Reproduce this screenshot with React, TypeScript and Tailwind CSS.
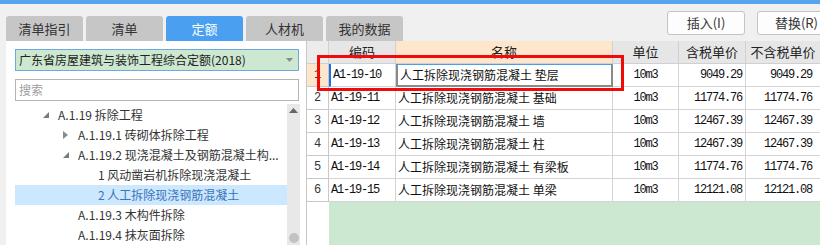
import React from "react";

const cjk = { fontFamily: '"Noto Sans CJK SC", "Noto Sans", sans-serif' };
const mono = { fontFamily: '"Liberation Mono", "Noto Sans CJK SC", monospace' };

const tabs = ["清单指引", "清单", "定额", "人材机", "我的数据"];

const rows = [
  { code: "A1-19-10", name: "人工拆除现浇钢筋混凝土 垫层", tax: "9049.29", net: "9049.29" },
  { code: "A1-19-11", name: "人工拆除现浇钢筋混凝土 基础", tax: "11774.76", net: "11774.76" },
  { code: "A1-19-12", name: "人工拆除现浇钢筋混凝土 墙", tax: "12467.39", net: "12467.39" },
  { code: "A1-19-13", name: "人工拆除现浇钢筋混凝土 柱", tax: "12467.39", net: "12467.39" },
  { code: "A1-19-14", name: "人工拆除现浇钢筋混凝土 有梁板", tax: "11774.76", net: "11774.76" },
  { code: "A1-19-15", name: "人工拆除现浇钢筋混凝土 单梁", tax: "12121.08", net: "12121.08" },
];

type Node = { level: number; label: string; arrow?: "open" | "closed"; selected?: boolean };

const tree: Node[] = [
  { level: 0, label: "A.1.19 拆除工程", arrow: "open" },
  { level: 1, label: "A.1.19.1 砖砌体拆除工程", arrow: "closed" },
  { level: 1, label: "A.1.19.2 现浇混凝土及钢筋混凝土构...", arrow: "open" },
  { level: 2, label: "1 风动凿岩机拆除现浇混凝土" },
  { level: 2, label: "2 人工拆除现浇钢筋混凝土", selected: true },
  { level: 1, label: "A.1.19.3 木构件拆除" },
  { level: 1, label: "A.1.19.4 抹灰面拆除" },
];

function Arrow({ kind }: { kind: "open" | "closed" }) {
  return kind === "open" ? (
    <svg width="6" height="6" viewBox="0 0 6 6" className="shrink-0">
      <polygon points="6,0 6,6 0,6" fill="#7a7a7a" />
    </svg>
  ) : (
    <svg width="5" height="8" viewBox="0 0 5 8" className="shrink-0">
      <polygon points="0,0 5,4 0,8" fill="#8a8a8a" />
    </svg>
  );
}

function TreeRow({ node }: { node: Node }) {
  const pad = 28 + node.level * 20;
  return (
    <div
      className={`flex h-[20px] items-center text-[12px] ${
        node.selected ? "bg-[#cce8ff] text-[#3b72b8]" : "text-[#333]"
      }`}
      style={{ paddingLeft: pad }}
    >
      <span className="flex w-[15px] items-center">{node.arrow && <Arrow kind={node.arrow} />}</span>
      <span className="whitespace-nowrap">{node.label}</span>
    </div>
  );
}

export default function App() {
  return (
    <div className="relative h-[245px] w-[820px] overflow-hidden bg-[#f0f0f0]" style={cjk}>
      <div className="h-[4px] bg-[#56a4ee]" />

      <div className="flex h-[37px]">
        <div className="flex items-end gap-[3px] pl-[6px]">
          {tabs.map((t) => (
            <div
              key={t}
              className={`flex h-[25px] w-[77px] items-center justify-center rounded-t-[3px] text-[13px] ${
                t === "定额" ? "bg-[#4a9ff0] text-white" : "bg-[#c6c6c6] text-[#333]"
              }`}
            >
              {t}
            </div>
          ))}
        </div>
        <div className="ml-auto mt-[7px] flex gap-[12px] self-start">
          <button className="h-[24px] w-[78px] rounded-[3px] border border-[#c4c4c4] bg-[#fdfdfd] text-[13px] text-[#333]">
            插入(I)
          </button>
          <button className="-mr-[16px] h-[24px] w-[79px] rounded-[3px] border border-[#c4c4c4] bg-[#fdfdfd] text-[13px] text-[#333]">
            替换(R)
          </button>
        </div>
      </div>

      <div className="flex h-[204px]">
        <div className="ml-[6px] flex w-[300px] flex-col bg-white pl-[9px]">
          <div className="mt-[8px] flex h-[25px] w-[284px] items-center justify-between border border-[#6fa8e0] bg-[#cde8d0] pl-[3px] pr-[5px] text-[12px] text-[#222]">
            <span>广东省房屋建筑与装饰工程综合定额(2018)</span>
            <svg width="7" height="4" viewBox="0 0 7 4">
              <polygon points="0,0 7,0 3.5,4" fill="#8a8a8a" />
            </svg>
          </div>
          <div className="mt-[8px] flex h-[25px] w-[284px] items-center border border-[#b4b4b4] pl-[3px] text-[12px] text-[#a0a0a0]">
            搜索
          </div>
          <div className="mt-[3px] flex flex-1">
            <div className="-ml-[9px] w-[281px] pt-[1px] pl-[9px]">
              {tree.map((n) => (
                <TreeRow key={n.label} node={n} />
              ))}
            </div>
            <div className="relative w-[13px] bg-[#e8e8e8]">
              <svg width="9" height="5" viewBox="0 0 9 5" className="absolute left-[2px] top-[4px]">
                <polygon points="0,5 9,5 4.5,0" fill="#666" />
              </svg>
              <div className="absolute left-[2px] top-[129px] h-[10px] w-[10px] rounded-full bg-[#c2c2c2]" />
            </div>
          </div>
        </div>

        <div className="flex flex-1 flex-col border-l border-[#c8c8c8] bg-white text-[12px] text-[#111]">
          <div className="grid h-[23px] shrink-0 grid-cols-[22px_67px_217px_66px_67px_1fr] overflow-hidden whitespace-nowrap text-[13px] text-[#222]">
            <div className="border-b border-r border-[#d0d0d0] bg-[#ececec]" />
            <div className="flex items-center justify-center border-b border-r border-[#d0d0d0] bg-[#e6e6e6]">编码</div>
            <div className="flex items-center justify-center border-b border-r border-[#d0d0d0] bg-[#fde6cc]">名称</div>
            <div className="flex items-center justify-center border-b border-r border-[#d0d0d0] bg-[#e6e6e6]">单位</div>
            <div className="flex items-center justify-center border-b border-r border-[#d0d0d0] bg-[#e6e6e6]">含税单价</div>
            <div className="flex items-center justify-center border-b border-[#d0d0d0] bg-[#e6e6e6]">不含税单价</div>
          </div>
          {rows.map((r, i) => (
            <div key={r.code} className="grid h-[23px] shrink-0 grid-cols-[22px_67px_217px_66px_67px_1fr] overflow-hidden whitespace-nowrap">
              <div
                className={`flex items-center justify-center border-b border-r border-[#c8c8c8] text-[#333] ${
                  i === 0 ? "bg-[#fde6cc]" : ""
                }`}
                style={mono}
              >
                {i + 1}
              </div>
              <div
                className={`flex items-center border-b border-r border-[#d4d4d4] pl-[2px] tracking-[-1.2px] ${
                  i === 0 ? "border-l-2 border-l-[#1a74e8]" : ""
                }`}
                style={mono}
              >
                {r.code}
              </div>
              <div
                className={`flex items-center border-[#d4d4d4] pl-[2px] ${
                  i === 0
                    ? "border-b-2 border-l-2 border-r-2 border-t border-b-[#8a8a8a] border-l-[#8a8a8a] border-r-[#8a8a8a] border-t-[#4a9de8]"
                    : "border-b border-r"
                }`}
              >
                {r.name}
              </div>
              <div className="flex items-center justify-center border-b border-r border-[#d4d4d4] tracking-[-1.2px]" style={mono}>
                10m3
              </div>
              <div className="flex items-center justify-end border-b border-r border-[#d4d4d4] pr-[3px] tracking-[-1.2px]" style={mono}>
                {r.tax}
              </div>
              <div className="flex items-center justify-end border-b border-[#d4d4d4] pr-[8px] tracking-[-1.2px]" style={mono}>
                {r.net}
              </div>
            </div>
          ))}
          <div className="flex flex-1">
            <div className="w-[22px] bg-white" />
            <div className="flex-1 bg-[#cde8d0]" />
          </div>
        </div>
      </div>

      <div className="absolute left-[317px] top-[55px] h-[36px] w-[307px] border-[3px] border-[#f00a0a]" />
    </div>
  );
}
